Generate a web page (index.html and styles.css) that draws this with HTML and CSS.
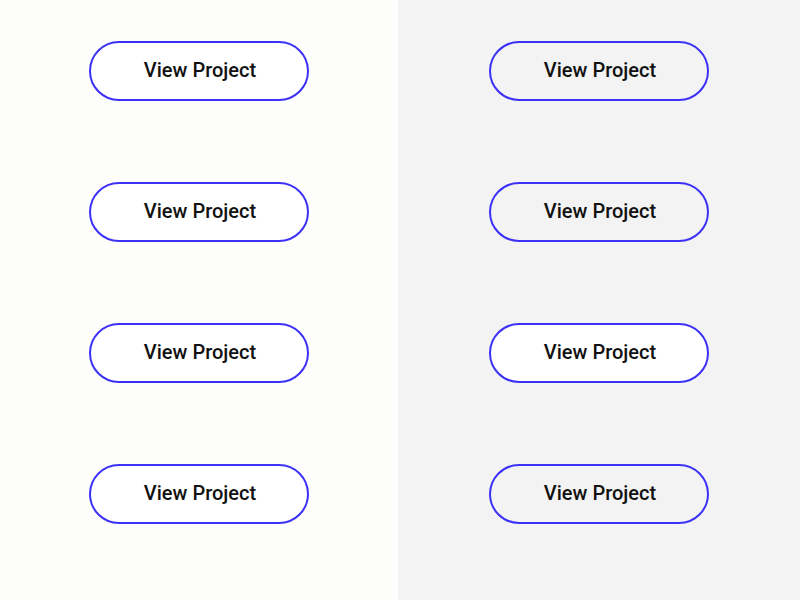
FILE: index.html
```html
<!DOCTYPE html>
<html lang="en">
<head>
  <meta charset="UTF-8" />
  <meta name="viewport" content="width=device-width, initial-scale=1.0"/>
  <title>Button States</title>
  <link rel="stylesheet" href="styles.css">
</head>
<body>

  <div class="board">
    <!-- Light panel -->
    <div class="panel panel-light">
      <button class="project-btn filled">View Project</button>
      <button class="project-btn filled">View Project</button>
      <button class="project-btn filled">View Project</button>
      <button class="project-btn filled">View Project</button>
    </div>

    <!-- Grey panel -->
    <div class="panel panel-grey">
      <button class="project-btn">View Project</button>
      <button class="project-btn">View Project</button>
      <button class="project-btn filled">View Project</button>
      <button class="project-btn">View Project</button>
    </div>
  </div>

</body>
</html>
```

FILE: styles.css
```css
body {
  margin: 0;
  font-family: Roboto, "Liberation Sans", Arial, sans-serif;
  color: #111;
}
.board {
  display: grid;
  grid-template-columns: 398px 402px;
  width: 800px;
  height: 600px;
}
.panel {
  display: flex;
  flex-direction: column;
  align-items: center;
  gap: 81px;
  padding-top: 41px;
  box-sizing: border-box;
}
.panel-light {
  background-color: #fdfdfc;
}
.panel-grey {
  background-color: #f3f3f3;
}
.project-btn {
  width: 220px;
  height: 60px;
  padding: 0 0 3px 2px;
  border: 2px solid #3d30f7;
  border-radius: 30px;
  background: transparent;
  font-family: inherit;
  font-size: 20px;
  font-weight: 500;
  color: #111;
  cursor: pointer;
}
.project-btn.filled {
  background-color: #fff;
}
```
